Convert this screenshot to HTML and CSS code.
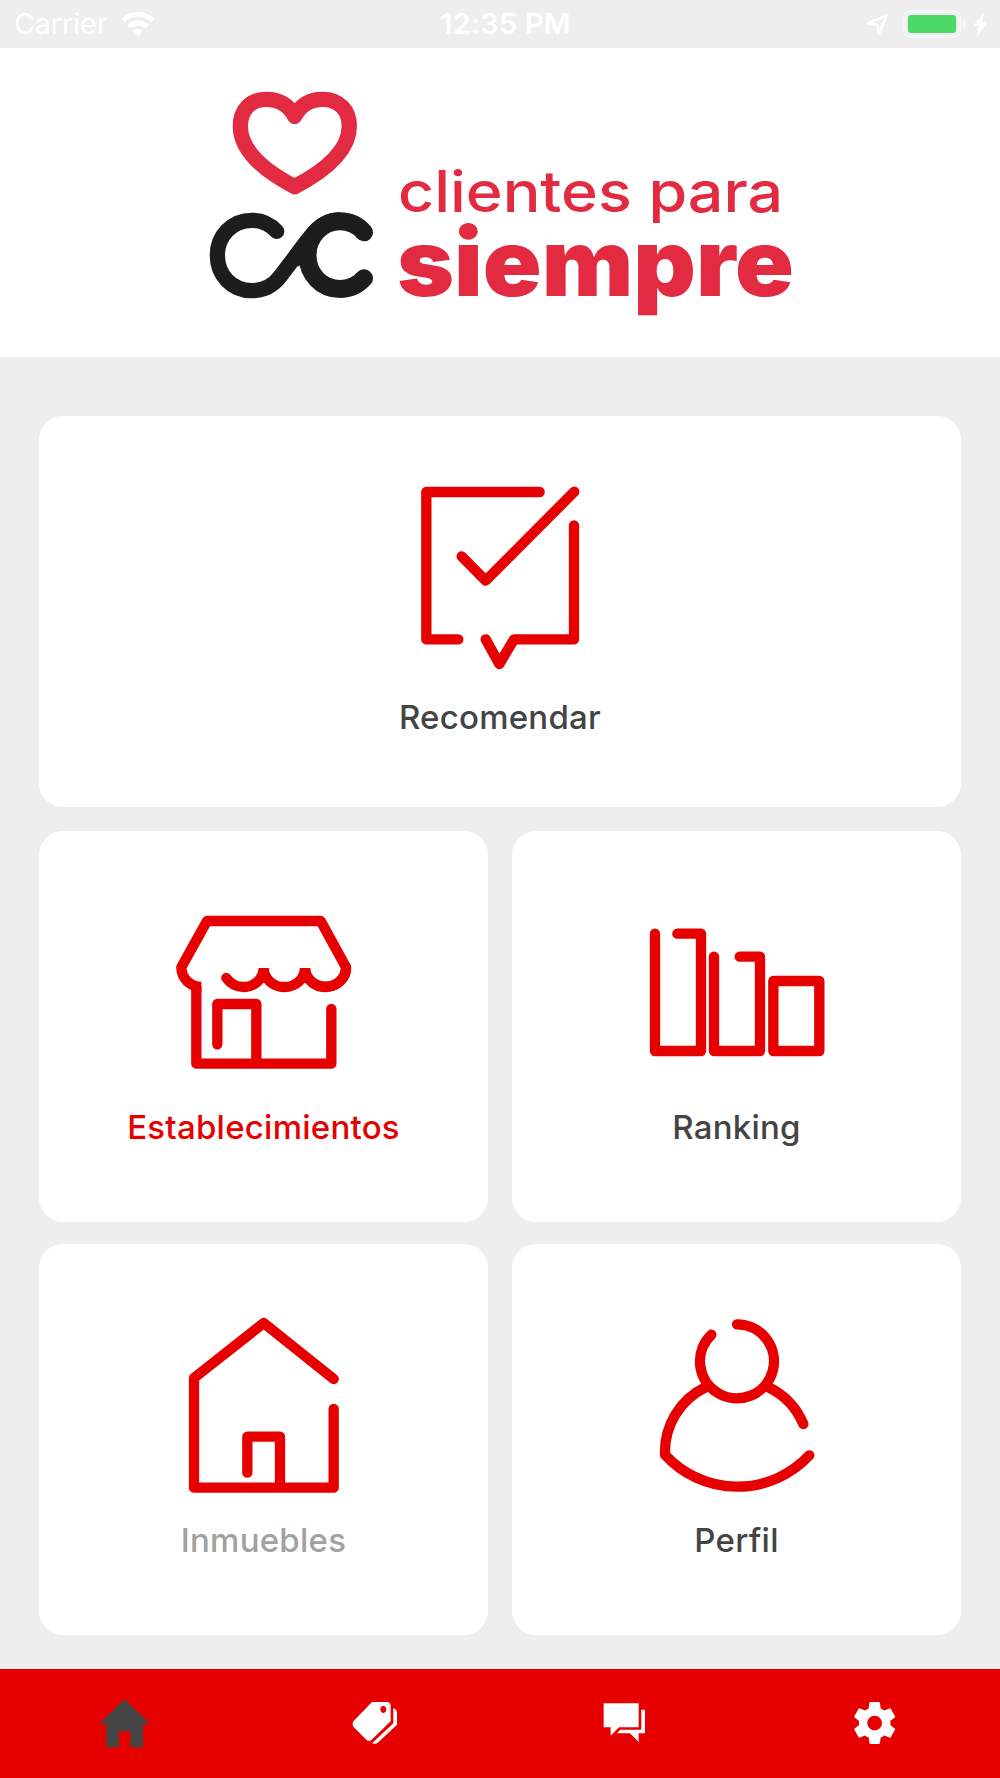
FILE: index.html
```
<!DOCTYPE html>
<html lang="es">
<head>
<meta charset="UTF-8" />
<meta name="viewport" content="width=device-width, initial-scale=1" />
<title>Clientes para siempre</title>
<link rel="stylesheet" href="styles.css">
</head>
<body>

<div class="status-bar">
  <div class="status-left">
    <span class="carrier">Carrier</span>
    <svg class="wifi" viewBox="0 0 34 24">
      <path d="M17 24l-5-5.2a7.5 7.5 0 0 1 10 0z" />
      <path class="wave" d="M7.7 14.6a13.6 13.6 0 0 1 18.6 0M2 8.6a21.6 21.6 0 0 1 30 0" />
    </svg>
  </div>
  <span class="time">12:35 PM</span>
  <svg class="status-icons" viewBox="0 0 160 48">
    <path class="location" d="M27.5 23.5L46.5 15.3L39 34L37.5 25Z" />
    <rect class="battery" x="64.3" y="11.8" width="55.4" height="24.4" rx="5" />
    <rect class="charge" x="68" y="15" width="48" height="18" rx="3" />
    <path class="nub" d="M123 19q3 1.500 3 5t-3 5z" />
    <path class="bolt" d="M144 12.500L133.500 25.500H139L136.500 37L147.700 22H142Z" />
  </svg>
</div>

<header class="header">
  <svg class="logo" viewBox="200 48 600 309">
    <g transform="translate(190 70) scale(.33333)">
      <path class="heart" d="M314 139C298 108 270 88 228 88C180 88 151 122 151 168C151 240 222 302 314 350C406 302 478 240 478 168C478 122 448 88 398 88C356 88 330 108 314 139Z" />
      <path class="c-left" d="M260 484C240 462 215 451 186 451C125 451 82 498 82 556C82 615 125 662 186 662C222 662 250 646 270 620L352 512" />
      <path class="c-right" d="M522 487C503 465 480 454 450 454C395 454 352.500 500 352.500 556C352.500 612 395 657 450 657C480 657 503 646 522 625" />
      <path class="c-fill" d="M300 544L334 498L345 484C372 448 408 427 450 427L440 450L400 465L365 520L352 560L325 590Z" />
    </g>
    <text class="logo-light" x="398" y="212" textLength="385" lengthAdjust="spacingAndGlyphs">clientes para</text>
    <text class="logo-heavy" x="397" y="296" textLength="397" lengthAdjust="spacingAndGlyphs">siempre</text>
  </svg>
</header>

<main class="menu">
  <a class="card card-wide">
    <svg class="icon" viewBox="0 48 720 600">
      <path d="M479 96H139V538H235M317 538L358 612L402 538H582V196M245 289L317 362L583 95" />
    </svg>
    <span class="label">Recomendar</span>
  </a>
  <a class="card active">
    <svg class="icon" viewBox="102 3 720 600">
      <path class="awning" d="M349 264Q369 291 400 291A61 57 0 0 0 461 234A62 57 0 0 0 585 234A61.500 57 0 0 0 708 232" />
      <path class="roof" d="M585 234A61.500 58 0 0 0 708 232L632 93H291L214 232A60 59 0 0 0 274 291" />
      <path d="M259 291V521H664V357M322 463V342H439V521" />
    </svg>
    <span class="label">Establecimientos</span>
  </a>
  <a class="card">
    <svg class="icon" viewBox="-9 -27 720 600">
      <path d="M105 101V453H243V101H172M282 170V453H420V170H359M460 243H598V453H460Z" />
    </svg>
    <span class="label">Ranking</span>
  </a>
  <a class="card disabled">
    <svg class="icon" viewBox="-48 42 720 600">
      <path d="M521 267L311 99L102 264V593H521V357M262 548V440H360V593" />
    </svg>
    <span class="label">Inmuebles</span>
  </a>
  <a class="card">
    <svg class="icon" viewBox="-39 42 720 600">
      <path d="M321 103A111 111 0 1 1 244 134M520 402A216 216 0 0 0 414 291M228 291A216 216 0 0 0 105 494A294 294 0 0 0 538 496" />
    </svg>
    <span class="label">Perfil</span>
  </a>
</main>

<nav class="tabs">
  <a class="tab selected">
    <svg viewBox="45 99 180 180">
      <path d="M134 118L210 191H189V262H151V214H117V262H79V191H58Z" />
    </svg>
  </a>
  <a class="tab">
    <svg viewBox="795 99 180 180">
      <path fill-rule="evenodd" d="M876 126H922Q932 128 932 138V184L875 239Q867 246 859 239L820 200Q815 193 820 184ZM910 137a9 11 0 1 0 .1 0Z" />
      <path d="M940 144Q951 149 951 158V194L895 247Q886 255 877 249L940 190Z" />
    </svg>
  </a>
  <a class="tab">
    <svg viewBox="45 99 180 180">
      <path d="M71 130H176V202H117L92 227V202H71ZM184 149H195V220H176V246L150 220H111L121 209H184Z" />
    </svg>
  </a>
  <a class="tab">
    <svg viewBox="795 99 180 180">
      <path transform="translate(808.4 113.400) scale(6.3)" d="M19.43 12.98c.04-.32.07-.64.07-.98s-.03-.66-.07-.98l2.110-1.650c.19-.15.24-.42.12-.64l-2-3.460c-.12-.22-.39-.3-.61-.22l-2.490 1c-.52-.4-1.080-.73-1.690-.98l-.38-2.650C14.460 2.180 14.250 2 14 2h-4c-.25 0-.46.18-.49.42l-.38 2.650c-.61.25-1.170.59-1.690.98l-2.490-1c-.23-.09-.49 0-.61.22l-2 3.460c-.13.22-.07.49.12.64l2.110 1.650c-.04.32-.07.65-.07.98s.03.66.07.98l-2.110 1.650c-.19.15-.24.42-.12.64l2 3.460c.12.22.39.3.61.22l2.490-1c.52.4 1.080.73 1.690.98l.38 2.650c.03.24.24.42.49.42h4c.25 0 .46-.18.49-.42l.38-2.650c.61-.25 1.170-.59 1.690-.98l2.490 1c.23.09.49 0 .61-.22l2-3.460c.12-.22.07-.49-.12-.64l-2.110-1.650zM12 15.500c-1.930 0-3.500-1.570-3.500-3.500s1.570-3.500 3.500-3.500 3.500 1.570 3.500 3.500-1.570 3.500-3.500 3.500z" />
    </svg>
  </a>
</nav>

</body>
</html>
```
FILE: styles.css
```
* {
  box-sizing: border-box;
}
body {
  margin: 0;
  height: 1778px;
  display: flex;
  flex-direction: column;
  background: #eee;
  color: #444;
  font-family: Inter, sans-serif;
}
svg {
  display: block;
}

/* status bar */
.status-bar {
  height: 48px;
  display: grid;
  grid-template-columns: 1fr auto 1fr;
  align-items: center;
  color: #fff;
  font-size: 29px;
}
.status-left {
  display: flex;
  align-items: center;
  gap: 13px;
  padding-left: 14px;
}
.carrier {
  width: 94px;
  font-size: 28.5px;
  line-height: 46px;
}
.wifi {
  width: 34px;
  height: 24px;
  fill: #fff;
}
.wifi .wave {
  fill: none;
  stroke: #fff;
  stroke-width: 5;
}
.time {
  font-weight: 600;
  line-height: 46px;
  letter-spacing: .2px;
  padding-left: 11px;
}
.status-icons {
  width: 160px;
  height: 48px;
  justify-self: end;
  fill: #fff;
}
.status-icons .location {
  fill: none;
  stroke: #fff;
  stroke-width: 2.5;
  stroke-linejoin: round;
}
.status-icons .battery {
  fill: none;
  stroke: #f6f6f6;
  stroke-width: 2.5;
}
.status-icons .charge {
  fill: #4cd964;
}
.status-icons .nub {
  fill: #f6f6f6;
}

/* logo */
.header {
  height: 309px;
  background: #fff;
  display: flex;
  justify-content: center;
}
.logo {
  width: 600px;
  height: 309px;
}
.heart, .c-left, .c-right {
  fill: none;
  stroke-width: 46;
  stroke-linecap: round;
  stroke-linejoin: round;
}
.heart {
  stroke: #e22a41;
}
.c-left, .c-right {
  stroke: #1d1d1b;
}
.c-right {
  stroke-width: 54;
}
.c-fill {
  fill: #1d1d1b;
}
.logo-light, .logo-heavy {
  fill: #e22a41;
}
.logo-light {
  font-size: 57px;
  font-weight: 500;
}
.logo-heavy {
  font-size: 93px;
  font-weight: 900;
}

/* menu cards */
.menu {
  flex: 1;
  display: grid;
  grid-template-columns: 1fr 1fr;
  grid-template-rows: 415px 413px 391px;
  column-gap: 24px;
  padding: 59px 39px 0;
}
.card {
  height: 391px;
  display: flex;
  flex-direction: column;
  align-items: center;
  padding-top: 60px;
  background: #fff;
  border-radius: 24px;
}
.card-wide {
  grid-column: span 2;
}
.icon {
  width: 240px;
  height: 200px;
  fill: none;
  stroke: #e60000;
  stroke-width: 31;
  stroke-linecap: round;
  stroke-linejoin: round;
}
.icon .awning {
  stroke-linejoin: bevel;
}
.icon .roof {
  stroke-linecap: butt;
}
.label {
  margin-top: 16px;
  font-size: 33px;
  font-weight: 500;
  line-height: 40px;
  letter-spacing: .25px;
}
.card-wide .label {
  margin-top: 21px;
}
.active .label {
  color: #e60000;
}
.disabled .label {
  color: #a1a1a1;
}

/* bottom tabs */
.tabs {
  height: 109px;
  display: flex;
  background: #e60000;
}
.tab {
  flex: 1;
  display: flex;
  justify-content: center;
  padding-top: 24px;
}
.tab svg {
  width: 60px;
  height: 60px;
  fill: #fff;
}
.tab.selected svg {
  fill: #444;
}
```
